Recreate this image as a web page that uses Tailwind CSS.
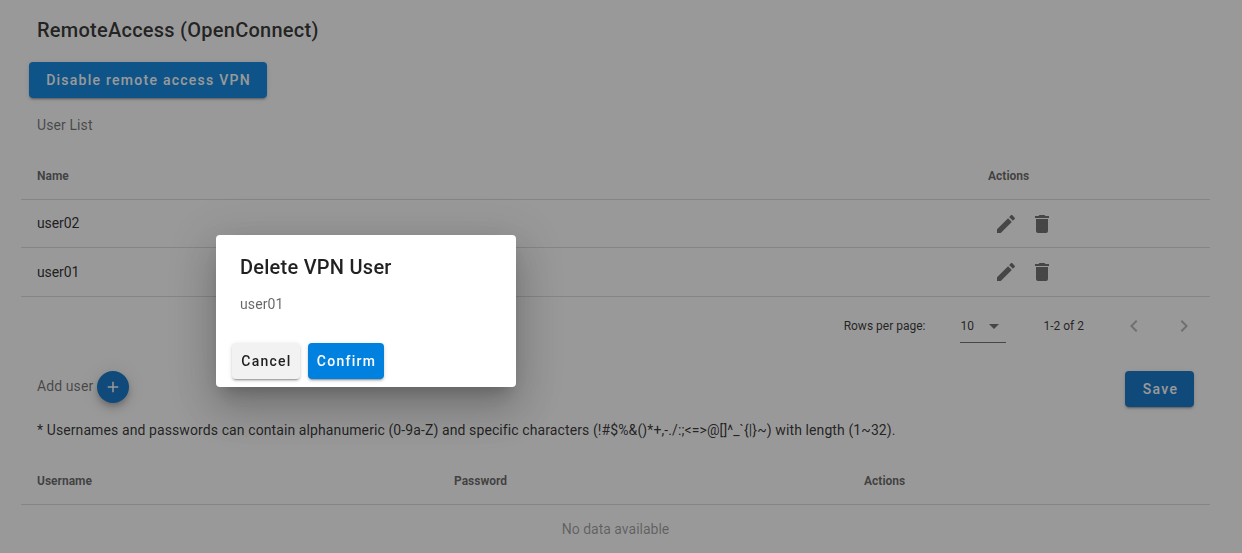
<!DOCTYPE html>
<html lang="en">
<head>
    <meta charset="utf-8">
    <title>RemoteAccess (OpenConnect)</title>
    <script src="https://cdn.jsdelivr.net/npm/@tailwindcss/browser@4"></script>
</head>
<body class="h-[553px] overflow-hidden bg-white font-[Roboto,sans-serif] text-black/87">
    <main class="ml-[21px] w-[1189px]">
        <h1 class="px-4 pt-[14px] text-xl leading-8 font-medium tracking-[0.0125em]">RemoteAccess (OpenConnect)</h1>
        <button class="mt-4 ml-2 block h-9 w-[238px] rounded bg-[#0080df] pl-px text-sm font-medium tracking-[0.0892857143em] text-white shadow-[0_3px_1px_-2px_rgba(0,0,0,.2),0_2px_2px_0_rgba(0,0,0,.14),0_1px_5px_0_rgba(0,0,0,.12)]">Disable remote access VPN</button>
        <p class="mt-4 px-4 text-sm leading-[22px] tracking-[0.0071428571em] text-black/60">User List</p>

        <!-- users -->
        <div class="mt-4">
            <div class="flex h-12 items-center border-b border-black/14 text-xs font-bold text-black/65">
                <div class="w-[951px] px-4">Name</div>
                <div class="px-4">Actions</div>
            </div>
            <div class="flex h-12 items-center border-b border-black/14 text-sm text-black/90">
                <div class="w-[951px] px-4 pb-0.5 tracking-[-0.1px]">user02</div>
                <div class="flex gap-3 px-[22px] text-black/60">
                    <svg class="size-6" viewBox="0 0 24 24" fill="currentColor"><path d="M20.71,7.04C21.1,6.65 21.1,6 20.71,5.63L18.37,3.29C18,2.9 17.35,2.9 16.96,3.29L15.12,5.12L18.87,8.87M3,17.25V21H6.75L17.81,9.93L14.06,6.18L3,17.25Z"/></svg>
                    <svg class="size-6" viewBox="0 0 24 24" fill="currentColor"><path d="M19,4H15.5L14.5,3H9.5L8.5,4H5V6H19M6,19A2,2 0 0,0 8,21H16A2,2 0 0,0 18,19V7H6V19Z"/></svg>
                </div>
            </div>
            <div class="flex h-[49px] items-center border-b border-black/14 text-sm text-black/90">
                <div class="w-[951px] px-4 tracking-[-0.1px]">user01</div>
                <div class="flex gap-3 px-[22px] text-black/60">
                    <svg class="size-6" viewBox="0 0 24 24" fill="currentColor"><path d="M20.71,7.04C21.1,6.65 21.1,6 20.71,5.63L18.37,3.29C18,2.9 17.35,2.9 16.96,3.29L15.12,5.12L18.87,8.87M3,17.25V21H6.75L17.81,9.93L14.06,6.18L3,17.25Z"/></svg>
                    <svg class="size-6" viewBox="0 0 24 24" fill="currentColor"><path d="M19,4H15.5L14.5,3H9.5L8.5,4H5V6H19M6,19A2,2 0 0,0 8,21H16A2,2 0 0,0 18,19V7H6V19Z"/></svg>
                </div>
            </div>
            <div class="flex h-[58px] items-center justify-end pr-[14px] text-xs">
                <span>Rows per page:</span>
                <div class="mt-px ml-[35px] flex h-8 w-[46px] items-center border-b border-black/60">
                    <span>10</span>
                    <svg class="ml-2 size-6 text-black/60" viewBox="0 0 24 24" fill="currentColor"><path d="M7,10L12,15L17,10H7Z"/></svg>
                </div>
                <span class="ml-[37px]">1-2 of 2</span>
                <svg class="ml-[38px] size-6 text-black/30" viewBox="0 0 24 24" fill="currentColor"><path d="M15.41,16.58L10.83,12L15.41,7.41L14,6L8,12L14,18L15.41,16.58Z"/></svg>
                <svg class="ml-[26px] size-6 text-black/30" viewBox="0 0 24 24" fill="currentColor"><path d="M8.59,16.58L13.17,12L8.59,7.41L10,6L16,12L10,18L8.59,16.58Z"/></svg>
            </div>
        </div>

        <div class="mt-4 flex items-start px-4">
            <span class="mt-1 text-sm leading-[22px] tracking-[0.0071428571em] text-black/60">Add user</span>
            <button class="ml-1 flex size-8 items-center justify-center rounded-full bg-[#016dc6] pr-px text-white shadow-[0_3px_5px_-1px_rgba(0,0,0,.2),0_6px_10px_0_rgba(0,0,0,.14),0_1px_18px_0_rgba(0,0,0,.12)]">
                <svg class="size-[18px]" viewBox="0 0 24 24" fill="currentColor"><path d="M19,13H13V19H11V13H5V11H11V5H13V11H19V13Z"/></svg>
            </button>
            <button class="ml-auto h-9 w-[69px] rounded bg-[#016dc6] pl-0.5 text-sm font-medium tracking-[0.0892857143em] text-white shadow-[0_3px_1px_-2px_rgba(0,0,0,.2),0_2px_2px_0_rgba(0,0,0,.14),0_1px_5px_0_rgba(0,0,0,.12)]">Save</button>
        </div>
        <p class="mt-3 px-4 text-sm leading-[22px] tracking-[0.0071428571em]">* Usernames and passwords can contain alphanumeric (0-9a-Z) and specific characters (!#$%&amp;()*+,-./:;&lt;=&gt;@[]^_`{|}~) with length (1~32).</p>

        <!-- new users -->
        <div class="mt-4">
            <div class="flex h-12 items-center border-b border-black/14 text-xs font-bold text-black/65">
                <div class="w-[417px] px-4">Username</div>
                <div class="w-[410px] px-4">Password</div>
                <div class="px-4">Actions</div>
            </div>
            <div class="flex h-12 items-center justify-center text-sm tracking-[0] text-black/42">No data available</div>
        </div>
    </main>

    <!-- delete dialog -->
    <div class="fixed inset-0 bg-[#212121]/46">
        <div class="mt-[235px] ml-[216px] h-[152px] w-[300px] rounded bg-white shadow-[0_11px_15px_-7px_rgba(0,0,0,.2),0_24px_38px_3px_rgba(0,0,0,.14),0_9px_46px_8px_rgba(0,0,0,.12)]">
            <h2 class="px-6 pt-4 text-xl leading-8 font-medium tracking-[0.0125em]">Delete VPN User</h2>
            <p class="mt-[10px] px-6 text-sm leading-[22px] tracking-[0.0071428571em] text-black/60">user01</p>
            <div class="mt-7 flex gap-2 px-4">
                <button class="h-9 w-[68px] rounded bg-[#f2f2f2] pl-px text-sm font-medium tracking-[0.0892857143em] shadow-[0_3px_1px_-2px_rgba(0,0,0,.2),0_2px_2px_0_rgba(0,0,0,.14),0_1px_5px_0_rgba(0,0,0,.12)]">Cancel</button>
                <button class="h-9 w-[76px] rounded bg-[#0080df] pl-px text-sm font-medium tracking-[0.0892857143em] text-white shadow-[0_3px_1px_-2px_rgba(0,0,0,.2),0_2px_2px_0_rgba(0,0,0,.14),0_1px_5px_0_rgba(0,0,0,.12)]">Confirm</button>
            </div>
        </div>
    </div>
</body>
</html>
